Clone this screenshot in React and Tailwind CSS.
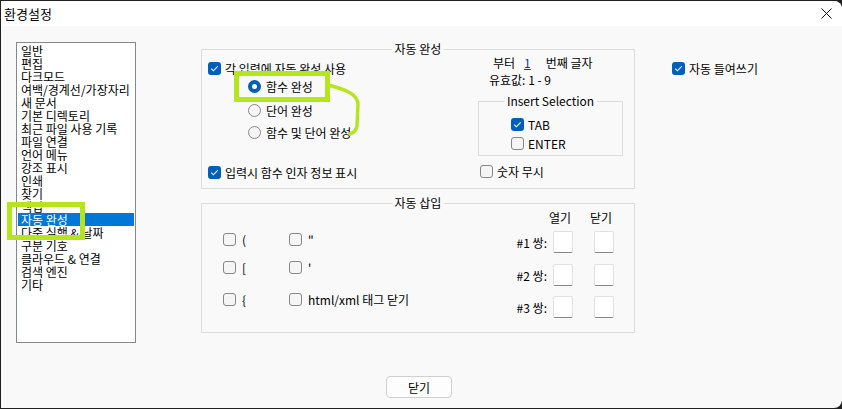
import React from "react";

const categories = [
  "일반",
  "편집",
  "다크모드",
  "여백/경계선/가장자리",
  "새 문서",
  "기본 디렉토리",
  "최근 파일 사용 기록",
  "파일 연결",
  "언어 메뉴",
  "강조 표시",
  "인쇄",
  "찾기",
  "백업",
  "자동 완성",
  "다중 실행 & 날짜",
  "구분 기호",
  "클라우드 & 연결",
  "검색 엔진",
  "기타",
];

function Check({ on }) {
  if (on) {
    return (
      <span className="flex h-[13px] w-[13px] shrink-0 items-center justify-center rounded-[3px] bg-[#005fb8]">
        <svg width="13" height="13" viewBox="0 0 13 13">
          <path d="M3.3 6.7l2.1 2.1 4.3-4.4" fill="none" stroke="#fff" strokeWidth="1.1" />
        </svg>
      </span>
    );
  }
  return <span className="block h-[13px] w-[13px] shrink-0 rounded-[3px] border border-[#878787] bg-[#f5f5f5]" />;
}

function Radio({ on }) {
  if (on) {
    return (
      <span className="flex h-[13px] w-[13px] shrink-0 items-center justify-center rounded-full bg-[#005fb8]">
        <span className="h-[5px] w-[5px] rounded-full bg-white" />
      </span>
    );
  }
  return <span className="block h-[13px] w-[13px] shrink-0 rounded-full border border-[#878787] bg-[#f5f5f5]" />;
}

function Group({ title, className, children }) {
  return (
    <div className={`relative border border-[#dcdcdc] ${className}`}>
      <div className="absolute -top-[8px] left-0 right-0 flex justify-center">
        <span className="bg-[#f9f9f9] px-[3px] leading-[13px]">{title}</span>
      </div>
      {children}
    </div>
  );
}

function EditBox() {
  return <span className="block h-[22px] w-[20px] rounded-[2px] border border-[#e1e1e1] border-b-[#868686] bg-white" />;
}

export default function App() {
  return (
    <div className="relative h-[409px] w-[842px] overflow-hidden bg-[#202020] pl-px pt-px font-['Noto_Sans_CJK_KR',sans-serif] text-[12px] leading-[13px] text-black">
      <div className="flex h-[407px] w-[841px] flex-col overflow-hidden rounded-r-[8px] bg-[#f9f9f9]">
        {/* TITLE BAR */}
        <div className="flex h-[25px] shrink-0 items-center justify-between bg-white pl-[3px] pr-[10px]">
          <span className="text-[13px]">환경설정</span>
          <svg width="11" height="11" viewBox="0 0 11 11">
            <path d="M0.5 0.5l10 10M10.5 0.5l-10 10" stroke="#111" strokeWidth="1" />
          </svg>
        </div>

        {/* BODY */}
        <div className="flex pl-[15px] pt-[16px]">
          <div className="h-[301px] w-[120px] shrink-0 border border-[#828790] bg-white px-px pt-px">
            {categories.map((c) => (
              <div
                key={c}
                className={`h-[13px] whitespace-nowrap pl-[3px] leading-[13px] ${
                  c === "자동 완성" ? "bg-[#0078d7] text-white" : ""
                }`}
              >
                {c}
              </div>
            ))}
          </div>

          <div className="ml-[65px] mt-[7px] flex flex-col">
            {/* AUTO COMPLETION */}
            <Group title="자동 완성" className="h-[140px] w-[434px]">
              <div className="flex">
                <div className="w-[276px] pl-[6px]">
                  <div className="mt-[12px] flex h-[13px] items-center gap-[4px]">
                    <Check on />
                    <span>각 입력에 자동 완성 사용</span>
                  </div>
                  <div className="mt-[5px] flex h-[13px] items-center gap-[5px] pl-[40px]">
                    <Radio on />
                    <span>함수 완성</span>
                  </div>
                  <div className="mt-[11px] flex h-[13px] items-center gap-[5px] pl-[40px]">
                    <Radio />
                    <span>단어 완성</span>
                  </div>
                  <div className="mt-[9px] flex h-[13px] items-center gap-[5px] pl-[40px]">
                    <Radio />
                    <span>함수 및 단어 완성</span>
                  </div>
                  <div className="mt-[27px] flex h-[13px] items-center gap-[4px]">
                    <Check on />
                    <span>입력시 함수 인자 정보 표시</span>
                  </div>
                </div>
                <div>
                  <div className="mt-[6px] flex h-[13px] items-center pl-[15px]">
                    <span>부터</span>
                    <span className="ml-[9px] text-[#0033cc] underline">1</span>
                    <span className="ml-[15px]">번째 글자</span>
                  </div>
                  <div className="mt-[4px] h-[13px] pl-[11px]">유효값: 1 - 9</div>
                  <Group title="Insert Selection" className="mt-[15px] h-[55px] w-[145px]">
                    <div className="mt-[16px] flex h-[13px] items-center gap-[4px] pl-[32px]">
                      <Check on />
                      <span>TAB</span>
                    </div>
                    <div className="mt-[6px] flex h-[13px] items-center gap-[4px] pl-[32px]">
                      <Check />
                      <span>ENTER</span>
                    </div>
                  </Group>
                  <div className="mt-[9px] flex h-[13px] items-center gap-[4px] pl-[2px]">
                    <Check />
                    <span>숫자 무시</span>
                  </div>
                </div>
              </div>
            </Group>

            {/* AUTO INSERT */}
            <Group title="자동 삽입" className="mt-[14px] h-[130px] w-[434px]">
              <div className="flex">
                <div className="w-[308px] pl-[21px]">
                  {[
                    ["(", '"', 29],
                    ["[", "'", 15],
                    ["{", "html/xml 태그 닫기", 19],
                  ].map(([a, b, mt]) => (
                    <div
                      key={a}
                      className={`flex h-[13px] items-center ${
                        mt === 29 ? "mt-[29px]" : mt === 15 ? "mt-[15px]" : "mt-[19px]"
                      }`}
                    >
                      <div className="flex w-[66px] items-center gap-[6px]">
                        <Check />
                        <span>{a}</span>
                      </div>
                      <div className="flex items-center gap-[6px]">
                        <Check />
                        <span>{b}</span>
                      </div>
                    </div>
                  ))}
                </div>
                <div>
                  <div className="mt-[7px] flex h-[13px] pl-[39px]">
                    <span className="w-[41px]">열기</span>
                    <span>닫기</span>
                  </div>
                  {["#1", "#2", "#3"].map((p, i) => (
                    <div
                      key={p}
                      className={`flex items-center ${i === 0 ? "mt-[7px]" : i === 1 ? "mt-[11px]" : "mt-[10px]"}`}
                    >
                      <span className="w-[37px] text-right">{p} 쌍:</span>
                      <span className="ml-[6px]">
                        <EditBox />
                      </span>
                      <span className="ml-[21px]">
                        <EditBox />
                      </span>
                    </div>
                  ))}
                </div>
              </div>
            </Group>
          </div>

          <div className="ml-[37px] mt-[20px] flex h-[13px] items-center gap-[4px] whitespace-nowrap">
            <Check on />
            <span>자동 들여쓰기</span>
          </div>
        </div>

        <button className="ml-[385px] mt-[33px] h-[22px] w-[66px] rounded-[4px] border border-[#d0d0d0] bg-[#fdfdfd] text-[12px]">
          닫기
        </button>
      </div>

      {/* annotation marks */}
      <svg className="pointer-events-none absolute left-0 top-0" width="842" height="409" viewBox="0 0 842 409">
        <rect x="9.5" y="204.5" width="73" height="33" fill="none" stroke="#b5e61d" strokeWidth="5" />
        <rect x="236.5" y="73.5" width="91" height="26" fill="none" stroke="#b5e61d" strokeWidth="5" />
        <path
          d="M328 85 C344 89 356 93 358 103 L357 126 Q356 132 350 134"
          fill="none"
          stroke="#b5e61d"
          strokeWidth="3.5"
          strokeLinecap="round"
        />
      </svg>
    </div>
  );
}
